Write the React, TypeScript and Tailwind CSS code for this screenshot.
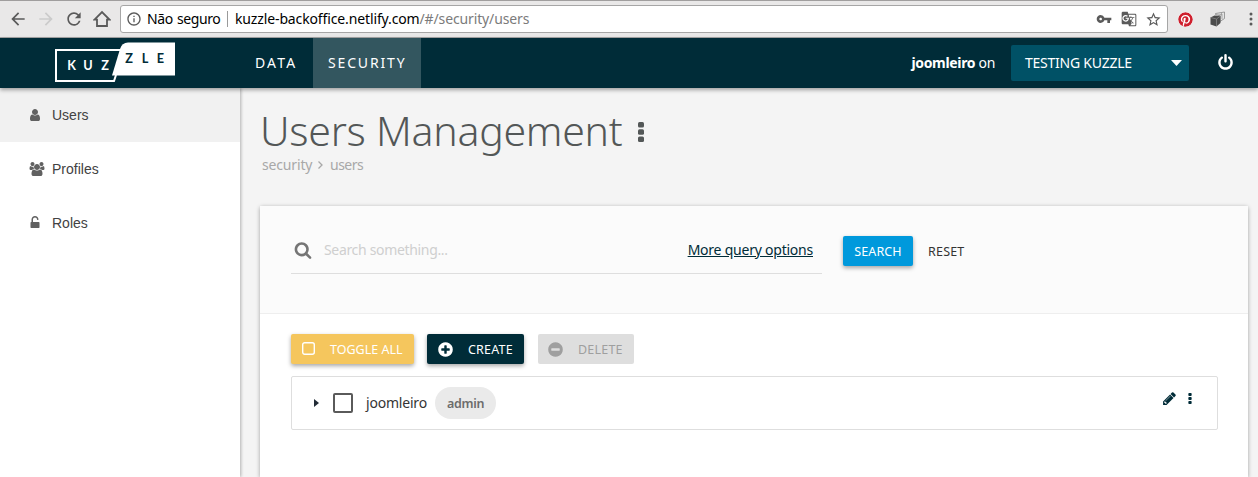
import React from "react";
import {
  MdArrowBack,
  MdArrowForward,
  MdRefresh,
  MdInfoOutline,
  MdVpnKey,
  MdGTranslate,
  MdStarBorder,
} from "react-icons/md";
import { FaPinterest } from "react-icons/fa";

const paths = {
  user: "M1536 1399q0 109-62.5 187t-150.5 78h-854q-88 0-150.5-78t-62.5-187q0-85 8.5-160.5t31.5-152 58.5-131 94-89 134.5-34.5q131 128 313 128t313-128q76 0 134.5 34.5t94 89 58.5 131 31.5 152 8.5 160.5zm-256-887q0 159-112.5 271.5t-271.5 112.5-271.5-112.5-112.5-271.5 112.5-271.5 271.5-112.5 271.5 112.5 112.5 271.5z",
  users:
    "M529 896q-162 5-265 128h-134q-82 0-138-40.5t-56-118.5q0-353 124-353 6 0 43.5 21t97.5 42.5 119 21.5q67 0 133-23-5 37-5 66 0 139 81 256zm1071 637q0 120-73 189.5t-194 69.5h-874q-121 0-194-69.5t-73-189.5q0-53 3.5-103.5t14-109 26.5-108.5 43-97.5 62-81 85.5-53.5 111.5-20q10 0 43 21.5t73 48 107 48 135 21.5 135-21.5 107-48 73-48 43-21.5q61 0 111.5 20t85.5 53.5 62 81 43 97.5 26.5 108.5 14 109 3.5 103.5zm-1024-1277q0 106-75 181t-181 75-181-75-75-181 75-181 181-75 181 75 75 181zm704 384q0 159-112.5 271.5t-271.5 112.5-271.5-112.5-112.5-271.5 112.5-271.5 271.5-112.5 271.5 112.5 112.5 271.5zm576 225q0 78-56 118.5t-138 40.5h-134q-103-123-265-128 81-117 81-256 0-29-5-66 66 23 133 23 59 0 119-21.5t97.5-42.5 43.5-21q124 0 124 353zm-128-609q0 106-75 181t-181 75-181-75-75-181 75-181 181-75 181 75 75 181z",
  unlock:
    "M1376 768q40 0 68 28t28 68v576q0 40-28 68t-68 28h-960q-40 0-68-28t-28-68v-576q0-40 28-68t68-28h32v-320q0-185 131.5-316.5t316.5-131.5 316.5 131.5 131.5 316.5q0 26-19 45t-45 19h-64q-26 0-45-19t-19-45q0-106-75-181t-181-75-181 75-75 181v320h736z",
  search:
    "M1216 832q0-185-131.5-316.5t-316.5-131.5-316.5 131.5-131.5 316.5 131.5 316.5 316.5 131.5 316.5-131.5 131.5-316.5zm512 832q0 52-38 90t-90 38q-54 0-90-38l-343-342q-179 124-399 124-143 0-273.5-55.5t-225-150-150-225-55.5-273.5 55.5-273.5 150-225 225-150 273.5-55.5 273.5 55.5 225 150 150 225 55.5 273.5q0 220-124 399l343 343q37 37 37 90z",
  pencil:
    "M491 1536l91-91-235-235-91 91v107h128v128h107zm523-928q0-22-22-22-10 0-17 7l-542 542q-7 7-7 17 0 22 22 22 10 0 17-7l542-542q7-7 7-17zm-54-192l416 416-832 832h-416v-416zm683 96q0 53-37 90l-166 166-416-416 166-165q36-38 90-38 53 0 91 38l235 234q37 39 37 91z",
  plus: "M1344 960v-128q0-26-19-45t-45-19h-256v-256q0-26-19-45t-45-19h-128q-26 0-45 19t-19 45v256h-256q-26 0-45 19t-19 45v128q0 26 19 45t45 19h256v256q0 26 19 45t45 19h128q26 0 45-19t19-45v-256h256q26 0 45-19t19-45zm320-64q0 209-103 385.5t-279.5 279.5-385.5 103-385.5-103-279.5-279.5-103-385.5 103-385.5 279.5-279.5 385.5-103 385.5 103 279.5 279.5 103 385.5z",
  minus:
    "M1344 960v-128q0-26-19-45t-45-19h-768q-26 0-45 19t-19 45v128q0 26 19 45t45 19h768q26 0 45-19t19-45zm320-64q0 209-103 385.5t-279.5 279.5-385.5 103-385.5-103-279.5-279.5-103-385.5 103-385.5 279.5-279.5 385.5-103 385.5 103 279.5 279.5 103 385.5z",
  power:
    "M1664 896q0 156-61 298t-164 245-245 164-298 61-298-61-245-164-164-245-61-298q0-182 80.5-343t226.5-270q43-32 95.5-25t83.5 50q32 42 24.5 94.5t-49.5 84.5q-98 74-151.5 181t-53.5 228q0 104 40.5 198.5t109.5 163.5 163.5 109.5 198.5 40.5 198.5-40.5 163.5-109.5 109.5-163.5 40.5-198.5q0-121-53.5-228t-151.5-181q-42-32-49.5-84.5t24.5-94.5q31-43 84-50t95 25q146 109 226.5 270t80.5 343zm-640-768v640q0 52-38 90t-90 38-90-38-38-90v-640q0-52 38-90t90-38 90 38 38 90z",
};

function Icon({ name, className }: { name: keyof typeof paths; className: string }) {
  return (
    <svg viewBox="0 0 1792 1792" fill="currentColor" className={`shrink-0 overflow-visible ${className}`}>
      <path d={paths[name]} />
    </svg>
  );
}

function Dots({ className }: { className: string }) {
  return (
    <svg viewBox="0 0 6 20" fill="currentColor" className={`shrink-0 ${className}`}>
      <rect width="6" height="5.4" rx="1.5" />
      <rect y="7.3" width="6" height="5.4" rx="1.5" />
      <rect y="14.6" width="6" height="5.4" rx="1.5" />
    </svg>
  );
}

function BrowserBar() {
  return (
    <div className="flex h-[38px] shrink-0 items-center border-t border-b border-t-[#a09e9e] border-b-[#a5a5a5] bg-[#e9e8e8] text-[#5a5a5a]">
      <MdArrowBack className="ml-[8px] size-[20px] shrink-0" />
      <MdArrowForward className="ml-[8px] size-[20px] shrink-0 text-[#cbcbcb]" />
      <MdRefresh className="ml-[8px] size-[20px] shrink-0" />
      <svg viewBox="0 0 18 18" className="ml-[9px] size-[18px] shrink-0" fill="none" stroke="currentColor" strokeWidth="1.8">
        <path d="M1.5 9.6 9 2l7.500 7.600H14V16H4V9.600z" />
      </svg>
      <div className="ml-[9px] flex h-[28px] w-[1048px] shrink-0 items-center rounded-[3px] border border-[#a6a6a6] bg-white text-[14px] text-black">
        <MdInfoOutline className="ml-[5px] size-[16px] shrink-0 text-[#5a5a5a]" />
        <span className="ml-[5px] w-[71px] shrink-0 pb-[2px] tracking-[-0.600px] whitespace-nowrap [word-spacing:1px] [letter-spacing:-0.4px]">Não seguro</span>
        <span className="ml-[9px] h-[16px] w-px bg-[#9a9a9a]" />
        <span className="ml-[7px] pb-[2px] tracking-[-0.130px] whitespace-nowrap">
          kuzzle-backoffice.netlify.com<span className="text-[#7b7b7b]">/#/security/users</span>
        </span>
        <div className="mr-[5px] ml-auto flex items-center text-[#5a5a5a]">
          <MdVpnKey className="size-[16px]" />
          <MdGTranslate className="ml-[9px] size-[16px]" />
          <MdStarBorder className="ml-[8px] size-[17px]" />
        </div>
      </div>
      <FaPinterest className="ml-[10px] size-[15px] shrink-0 rounded-full bg-white text-[#ce1f2d]" />
      <svg viewBox="0 0 16 16" className="ml-[17px] size-[16px] shrink-0">
        <path d="M5.500 3.500V2.500L14.500 1v6.500L10 10.500V4.500z" fill="#e4e4e4" stroke="#888" strokeWidth=".8" />
        <path d="M8 4.500l4-1.500v5M11.500 1.500v3" fill="none" stroke="#999" strokeWidth=".8" />
        <path d="M.5 6.500l4-2 6 .5v7l-4 3.500-6-2z" fill="#4c4c4c" />
        <path d="M.5 6.500l6 1.500 4-3M6.500 8v7" fill="none" stroke="#8c8c8c" strokeWidth=".7" />
      </svg>
      <svg viewBox="0 0 4 14" className="ml-[23px] h-[14px] w-[4px] shrink-0" fill="currentColor">
        <circle cx="2" cy="2" r="1.500" />
        <circle cx="2" cy="7" r="1.500" />
        <circle cx="2" cy="12" r="1.500" />
      </svg>
    </div>
  );
}

function Logo() {
  return (
    <svg viewBox="0 0 122 42" className="ml-[54px] h-[42px] w-[122px] shrink-0">
      <path d="M67 8H2v31h58l2-6" fill="none" stroke="#fff" strokeWidth="2" />
      <path d="M58 33.500 66 7q2-6.500 8-6.500h47v33z" fill="#fff" />
      <g fontFamily="Lato, sans-serif" fontWeight="700" fontSize="12.700" textAnchor="middle">
        <g fill="#fff">
          <text x="17.500" y="28">K</text>
          <text x="34" y="28">U</text>
          <text x="51" y="28">Z</text>
        </g>
        <g fill="#002c38">
          <text x="75" y="21">Z</text>
          <text x="91" y="21">L</text>
          <text x="106.500" y="21">E</text>
        </g>
      </g>
    </svg>
  );
}

function Header() {
  return (
    <header className="z-10 flex h-[50px] shrink-0 items-center bg-[#002c38] text-[14px] text-white shadow-[0_2px_4px_rgba(0,0,0,0.35)]">
      <Logo />
      <nav className="ml-[64px] flex h-full items-center whitespace-nowrap">
        <a className="w-[73px] pb-[2px] pl-[15px] tracking-[2.150px]">DATA</a>
        <a className="flex h-full w-[108px] items-center bg-[#33565f] pb-[2px] pl-[15px] tracking-[1.850px]">SECURITY</a>
      </nav>
      <div className="ml-auto flex items-center whitespace-nowrap">
        <span className="pb-[2px] tracking-[-0.330px]">
          <b>joomleiro</b> on
        </span>
        <button className="ml-[16px] flex h-[36px] w-[178px] items-center justify-between rounded-[2px] bg-[#005166] pr-[7px] pl-[14px]">
          <span className="pb-[2px] tracking-[-0.250px]">TESTING KUZZLE</span>
          <svg viewBox="0 0 11 6" className="h-[6px] w-[11px]" fill="#fff">
            <path d="M0 0h11L5.500 6z" />
          </svg>
        </button>
        <Icon name="power" className="mr-[24px] mb-[2px] ml-[28px] size-[17px]" />
      </div>
    </header>
  );
}

function Sidebar() {
  return (
    <aside className="z-[5] flex w-[240px] shrink-0 flex-col bg-white font-['Liberation_Sans',sans-serif] text-[14px] text-[#424242] shadow-[1px_0_3px_rgba(0,0,0,0.28)]">
      <a className="flex h-[54px] items-center bg-[#f1f1f1] pl-[30px]">
        <span className="flex w-[22px]">
          <Icon name="user" className="-ml-[2px] size-[14px] text-[#616161]" />
        </span>
        Users
      </a>
      <a className="flex h-[54px] items-center pl-[30px]">
        <span className="flex w-[22px]">
          <Icon name="users" className="size-[14px] text-[#616161]" />
        </span>
        Profiles
      </a>
      <a className="flex h-[54px] items-center pl-[30px]">
        <span className="flex w-[22px]">
          <Icon name="unlock" className="-ml-[2.500px] size-[14px] text-[#616161]" />
        </span>
        Roles
      </a>
    </aside>
  );
}

function SearchForm() {
  return (
    <div className="flex h-[108px] items-start border-b border-[#eee] bg-[#fbfbfb] pt-[30px] pl-[31px]">
      <div className="flex h-[38px] w-[531px] items-center border-b border-[#dedede] pr-[9px] pb-[9px]">
        <Icon name="search" className="ml-[3px] size-[18px] text-[#757575]" />
        <span className="ml-[12px] pb-[2px] text-[14px] tracking-[-0.330px] whitespace-nowrap text-[#cfcfcf]">Search something...</span>
        <a className="ml-auto pb-[2px] text-[14px] tracking-[-0.230px] whitespace-nowrap text-[#002c38] underline">More query options</a>
      </div>
      <button className="ml-[21px] h-[30px] w-[70px] rounded-[2px] bg-[#0099dc] pt-[2px] text-[12.500px] tracking-[0.100px] text-white shadow-[0_2px_4px_rgba(0,0,0,0.35)]">SEARCH</button>
      <button className="ml-[15px] h-[30px] pt-[2px] text-[12.500px] tracking-[0.200px] text-[#343434]">RESET</button>
    </div>
  );
}

function Actions() {
  return (
    <div className="flex h-[30px] text-[12.500px] whitespace-nowrap">
      <button className="flex w-[123px] items-center rounded-[2px] bg-[#f5c65d] pl-[11px] text-white shadow-[0_2px_4px_rgba(0,0,0,0.35)]">
        <svg viewBox="0 0 13 13" className="mb-px size-[13px]" fill="none" stroke="#fff" strokeWidth="1.400">
          <rect x=".7" y=".7" width="11.600" height="11.600" rx="2" />
        </svg>
        <span className="ml-[15px] pt-[2px]">TOGGLE ALL</span>
      </button>
      <button className="ml-[13px] flex w-[97px] items-center rounded-[2px] bg-[#002c38] pl-[10px] text-white shadow-[0_2px_4px_rgba(0,0,0,0.35)]">
        <Icon name="plus" className="size-[17px]" />
        <span className="ml-[14px] pt-[2px] tracking-[0.200px]">CREATE</span>
      </button>
      <button className="ml-[14px] flex w-[96px] items-center rounded-[2px] bg-[#dedede] pl-[9px] text-[#9f9f9f]">
        <Icon name="minus" className="size-[17px]" />
        <span className="ml-[14px] pt-[2px] tracking-[0.200px]">DELETE</span>
      </button>
    </div>
  );
}

function UserRow() {
  return (
    <div className="mt-[12px] flex h-[54px] items-center rounded-[2px] border border-[#dedede] pr-[25px] pl-[22px] text-[14px] text-[#343434]">
      <svg viewBox="0 0 5 8" className="h-[8px] w-[5px]" fill="#222b36">
        <path d="M0 0l5 4-5 4z" />
      </svg>
      <span className="ml-[14px] size-[20px] rounded-[2px] border-2 border-[#5a5a5a]" />
      <span className="ml-[13px] w-[61px] pb-[2px] tracking-[-0.200px]">joomleiro</span>
      <span className="ml-[8px] flex h-[32px] w-[61px] items-center justify-center rounded-full bg-[#eaeaea] pt-[2px] text-[12.500px] font-semibold tracking-[-0.300px] text-[#6c6c6c]">admin</span>
      <Icon name="pencil" className="mb-[9px] ml-auto size-[15px] text-[#002c38]" />
      <Dots className="mb-[10px] ml-[11px] h-[11px] w-[4px] text-[#002c38]" />
    </div>
  );
}

export default function App() {
  return (
    <div className="flex h-[477px] w-[1258px] flex-col overflow-hidden bg-[#f4f4f4] font-['Noto_Sans','Open_Sans',sans-serif]">
      <BrowserBar />
      <Header />
      <div className="flex min-h-0 flex-1">
        <Sidebar />
        <main className="flex w-[1018px] flex-col pt-[16px] pr-[10px] pl-[20px]">
          <div className="flex h-[54px] items-center text-[#535757]">
            <h1 className="pb-[2px] text-[41px] leading-[52px] font-light tracking-[-0.250px] whitespace-nowrap">Users Management</h1>
            <Dots className="mt-[2px] ml-[15px] h-[20px] w-[6px]" />
          </div>
          <div className="flex h-[12px] items-center pl-[2px] text-[14px] whitespace-nowrap text-[#a8a8a8]">
            <span className="w-[50px] tracking-[-0.150px]">security</span>
            <svg viewBox="0 0 5 8" className="mx-[6px] mt-[2px] h-[8px] w-[5px] overflow-visible" fill="none" stroke="currentColor" strokeWidth="1.300">
              <path d="M.5.500 4 4 .5 7.500" />
            </svg>
            <span className="ml-px tracking-[-0.500px]">users</span>
          </div>
          <section className="mt-[36px] flex flex-1 flex-col rounded-t-[2px] bg-white shadow-[0_1px_4px_rgba(0,0,0,0.35)]">
            <SearchForm />
            <div className="pt-[20px] pr-[30px] pl-[31px]">
              <Actions />
              <UserRow />
            </div>
          </section>
        </main>
      </div>
    </div>
  );
}
